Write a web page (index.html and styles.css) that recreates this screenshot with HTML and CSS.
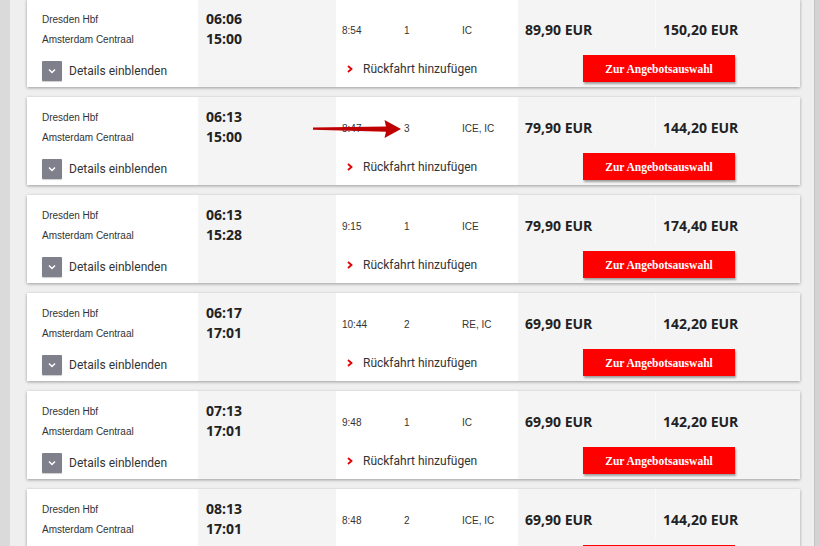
FILE: index.html
```html
<!DOCTYPE html>
<html lang="de">
<head>
<meta charset="utf-8">
<title>Verbindungen</title>
<link rel="stylesheet" href="styles.css">
</head>
<body>
<div class="page">
  <div class="strip-left"></div>
  <main class="list">
    <div class="card">
      <div class="c-stations">
        <div class="st">Dresden Hbf</div>
        <div class="st">Amsterdam Centraal</div>
        <div class="details"><span class="dbtn"><svg width="10" height="10" viewBox="0 0 10 10"><path d="M2 3.5 L5 6.5 L8 3.5" fill="none" stroke="#fff" stroke-width="1.5"/></svg></span>Details einblenden</div>
      </div>
      <div class="c-times"><div>06:06</div><div>15:00</div></div>
      <div class="c-info">
        <div class="info"><span class="dur">8:54</span><span class="chg">1</span><span class="prod">IC</span></div>
        <div class="ret"><svg width="8" height="10" viewBox="0 0 8 10"><path d="M2 2 L5.5 5 L2 8" fill="none" stroke="#e30000" stroke-width="1.8"/></svg>Rückfahrt hinzufügen</div>
      </div>
      <div class="c-prices">
        <div class="prices"><div class="p p1">89,90 EUR</div><div class="p">150,20 EUR</div></div>
        <div class="btnrow"><span class="offer">Zur Angebotsauswahl</span></div>
      </div>
    </div>

    <div class="card">
      <div class="c-stations">
        <div class="st">Dresden Hbf</div>
        <div class="st">Amsterdam Centraal</div>
        <div class="details"><span class="dbtn"><svg width="10" height="10" viewBox="0 0 10 10"><path d="M2 3.5 L5 6.5 L8 3.5" fill="none" stroke="#fff" stroke-width="1.5"/></svg></span>Details einblenden</div>
      </div>
      <div class="c-times"><div>06:13</div><div>15:00</div></div>
      <div class="c-info">
        <div class="info"><span class="dur">8:47</span><span class="chg">3</span><span class="prod">ICE, IC</span></div>
        <div class="ret"><svg width="8" height="10" viewBox="0 0 8 10"><path d="M2 2 L5.5 5 L2 8" fill="none" stroke="#e30000" stroke-width="1.8"/></svg>Rückfahrt hinzufügen</div>
      </div>
      <div class="c-prices">
        <div class="prices"><div class="p p1">79,90 EUR</div><div class="p">144,20 EUR</div></div>
        <div class="btnrow"><span class="offer">Zur Angebotsauswahl</span></div>
      </div>
      <svg class="arrow" width="90" height="20" viewBox="0 0 90 20"><path d="M0 8.6 L73 7.4 L71.5 1 L88 10 L71.5 19 L73 12.8 L0 10.8 Z" fill="#be0000"/></svg>
    </div>

    <div class="card">
      <div class="c-stations">
        <div class="st">Dresden Hbf</div>
        <div class="st">Amsterdam Centraal</div>
        <div class="details"><span class="dbtn"><svg width="10" height="10" viewBox="0 0 10 10"><path d="M2 3.5 L5 6.5 L8 3.5" fill="none" stroke="#fff" stroke-width="1.5"/></svg></span>Details einblenden</div>
      </div>
      <div class="c-times"><div>06:13</div><div>15:28</div></div>
      <div class="c-info">
        <div class="info"><span class="dur">9:15</span><span class="chg">1</span><span class="prod">ICE</span></div>
        <div class="ret"><svg width="8" height="10" viewBox="0 0 8 10"><path d="M2 2 L5.5 5 L2 8" fill="none" stroke="#e30000" stroke-width="1.8"/></svg>Rückfahrt hinzufügen</div>
      </div>
      <div class="c-prices">
        <div class="prices"><div class="p p1">79,90 EUR</div><div class="p">174,40 EUR</div></div>
        <div class="btnrow"><span class="offer">Zur Angebotsauswahl</span></div>
      </div>
    </div>

    <div class="card">
      <div class="c-stations">
        <div class="st">Dresden Hbf</div>
        <div class="st">Amsterdam Centraal</div>
        <div class="details"><span class="dbtn"><svg width="10" height="10" viewBox="0 0 10 10"><path d="M2 3.5 L5 6.5 L8 3.5" fill="none" stroke="#fff" stroke-width="1.5"/></svg></span>Details einblenden</div>
      </div>
      <div class="c-times"><div>06:17</div><div>17:01</div></div>
      <div class="c-info">
        <div class="info"><span class="dur">10:44</span><span class="chg">2</span><span class="prod">RE, IC</span></div>
        <div class="ret"><svg width="8" height="10" viewBox="0 0 8 10"><path d="M2 2 L5.5 5 L2 8" fill="none" stroke="#e30000" stroke-width="1.8"/></svg>Rückfahrt hinzufügen</div>
      </div>
      <div class="c-prices">
        <div class="prices"><div class="p p1">69,90 EUR</div><div class="p">142,20 EUR</div></div>
        <div class="btnrow"><span class="offer">Zur Angebotsauswahl</span></div>
      </div>
    </div>

    <div class="card">
      <div class="c-stations">
        <div class="st">Dresden Hbf</div>
        <div class="st">Amsterdam Centraal</div>
        <div class="details"><span class="dbtn"><svg width="10" height="10" viewBox="0 0 10 10"><path d="M2 3.5 L5 6.5 L8 3.5" fill="none" stroke="#fff" stroke-width="1.5"/></svg></span>Details einblenden</div>
      </div>
      <div class="c-times"><div>07:13</div><div>17:01</div></div>
      <div class="c-info">
        <div class="info"><span class="dur">9:48</span><span class="chg">1</span><span class="prod">IC</span></div>
        <div class="ret"><svg width="8" height="10" viewBox="0 0 8 10"><path d="M2 2 L5.5 5 L2 8" fill="none" stroke="#e30000" stroke-width="1.8"/></svg>Rückfahrt hinzufügen</div>
      </div>
      <div class="c-prices">
        <div class="prices"><div class="p p1">69,90 EUR</div><div class="p">142,20 EUR</div></div>
        <div class="btnrow"><span class="offer">Zur Angebotsauswahl</span></div>
      </div>
    </div>

    <div class="card">
      <div class="c-stations">
        <div class="st">Dresden Hbf</div>
        <div class="st">Amsterdam Centraal</div>
        <div class="details"><span class="dbtn"><svg width="10" height="10" viewBox="0 0 10 10"><path d="M2 3.5 L5 6.5 L8 3.5" fill="none" stroke="#fff" stroke-width="1.5"/></svg></span>Details einblenden</div>
      </div>
      <div class="c-times"><div>08:13</div><div>17:01</div></div>
      <div class="c-info">
        <div class="info"><span class="dur">8:48</span><span class="chg">2</span><span class="prod">ICE, IC</span></div>
        <div class="ret"><svg width="8" height="10" viewBox="0 0 8 10"><path d="M2 2 L5.5 5 L2 8" fill="none" stroke="#e30000" stroke-width="1.8"/></svg>Rückfahrt hinzufügen</div>
      </div>
      <div class="c-prices">
        <div class="prices"><div class="p p1">69,90 EUR</div><div class="p">144,20 EUR</div></div>
        <div class="btnrow"><span class="offer">Zur Angebotsauswahl</span></div>
      </div>
    </div>
  </main>
  <div class="strip-right"></div>
</div>
</body>
</html>
```

FILE: styles.css
```css
* { box-sizing: border-box; }
html, body { margin: 0; padding: 0; }
body {
  width: 820px;
  height: 546px;
  overflow: hidden;
  background: #efefef;
  font-family: "Liberation Sans", Arial, sans-serif;
  color: #333;
}
.page {
  display: flex;
  height: 546px;
}
.strip-left {
  width: 10px;
  flex: none;
  background: #dadada;
}
.strip-right {
  width: 6px;
  flex: none;
  background: #d3d3d3;
  border-left: 1px solid #c4c4c4;
}
.list {
  flex: 1;
  padding: 0 14px 0 17px;
  margin-top: -1px;
  display: flex;
  flex-direction: column;
  gap: 10px;
}
.card {
  position: relative;
  flex: none;
  display: flex;
  height: 88px;
  background: #fff;
  box-shadow: 0 1px 3px rgba(0,0,0,0.35);
}
.c-stations {
  width: 171px;
  padding: 11px 0 0 15px;
  font-size: 10px;
}
.st {
  line-height: 20px;
}
.details {
  display: flex;
  align-items: center;
  margin-top: 11px;
  font-family: Roboto, "Noto Sans", sans-serif;
  font-size: 12px;
  color: #333;
}
.dbtn {
  width: 20px;
  height: 20px;
  background: #7e818b;
  border-radius: 1px;
  display: flex;
  align-items: center;
  justify-content: center;
  margin-right: 7px;
  box-shadow: 0 1px 1px rgba(0,0,0,0.2);
}
.c-times {
  width: 138px;
  background: #f4f4f4;
  padding: 10px 0 0 8px;
  font-family: "Open Sans", "Noto Sans", sans-serif;
  font-weight: 700;
  font-size: 14px;
  line-height: 20px;
  color: #222;
}
.c-info {
  width: 182px;
  padding: 22px 0 0 6px;
  font-size: 10px;
}
.info {
  display: flex;
  line-height: 20px;
}
.dur { width: 62px; }
.chg { width: 58px; }
.ret {
  display: flex;
  align-items: center;
  margin-top: 21px;
  padding-left: 4px;
  font-family: Roboto, "Noto Sans", sans-serif;
  font-size: 12px;
  color: #333;
}
.ret svg { margin-right: 9px; }
.c-prices {
  width: 282px;
  background: #f4f4f4;
  display: flex;
  flex-direction: column;
}
.prices {
  display: flex;
  height: 49px;
}
.p {
  width: 144px;
  padding: 21px 0 0 7px;
  line-height: 20px;
  font-family: "Open Sans", "Noto Sans", sans-serif;
  font-weight: 700;
  font-size: 14px;
  color: #222;
}
.p1 {
  width: 138px;
  border-right: 1px solid #fafafa;
}
.btnrow {
  display: flex;
  justify-content: center;
  padding-top: 7px;
}
.offer {
  width: 152px;
  height: 27px;
  background: #ff0000;
  color: #fff;
  font-family: "Liberation Serif", "Times New Roman", serif;
  font-weight: 700;
  font-size: 11.5px;
  display: flex;
  align-items: center;
  justify-content: center;
  box-shadow: 1px 2px 2px rgba(0,0,0,0.35);
}
.arrow {
  position: absolute;
  left: 286px;
  top: 22px;
}
```
